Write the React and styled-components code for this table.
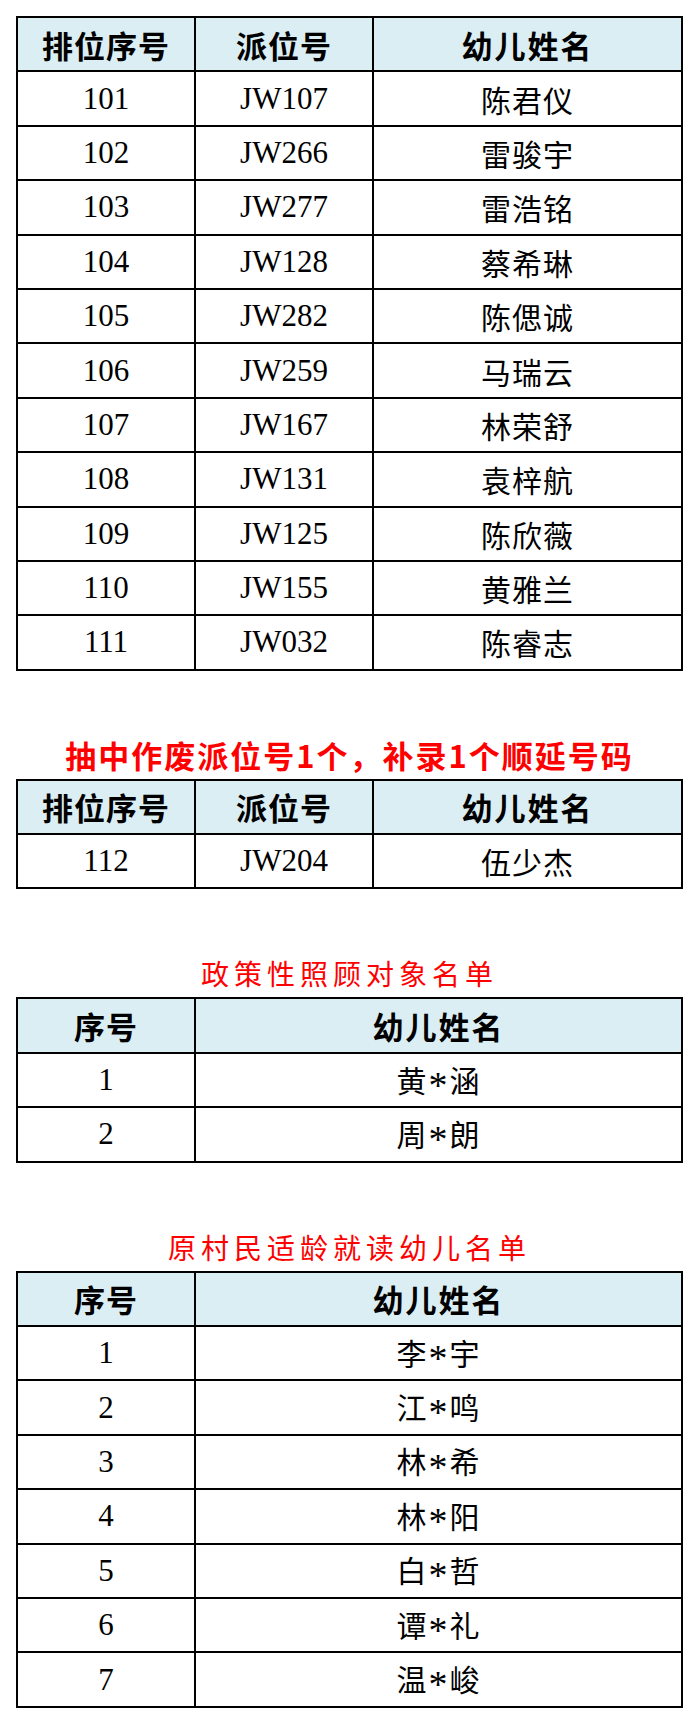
import styled, { createGlobalStyle } from 'styled-components';

const GlobalStyle = createGlobalStyle`
  html, body {
    margin: 0;
    padding: 0;
    background: #ffffff;
  }
`;

const lottery = [
  ['101', 'JW107', '陈君仪'],
  ['102', 'JW266', '雷骏宇'],
  ['103', 'JW277', '雷浩铭'],
  ['104', 'JW128', '蔡希琳'],
  ['105', 'JW282', '陈偲诚'],
  ['106', 'JW259', '马瑞云'],
  ['107', 'JW167', '林荣舒'],
  ['108', 'JW131', '袁梓航'],
  ['109', 'JW125', '陈欣薇'],
  ['110', 'JW155', '黄雅兰'],
  ['111', 'JW032', '陈睿志'],
];

const extra = [['112', 'JW204', '伍少杰']];

const policy = ['黄*涵', '周*朗'];

const villagers = ['李*宇', '江*鸣', '林*希', '林*阳', '白*哲', '谭*礼', '温*峻'];

// 把姓名中间的 * 单独放进 span，让它居中
const maskName = (name) => {
  const parts = name.split('*');
  if (parts.length < 2) return name;
  return (
    <>
      {parts[0]}
      <Star>*</Star>
      {parts[1]}
    </>
  );
};

// 三列表格（排位序号 / 派位号 / 幼儿姓名）
const DrawTable = ({ rows }) => (
  <Table>
    <colgroup>
      <col style={{ width: 178 }} />
      <col style={{ width: 178 }} />
      <col />
    </colgroup>
    <thead>
      <Row>
        <HeadCell>排位序号</HeadCell>
        <HeadCell>派位号</HeadCell>
        <HeadCell $wide>幼儿姓名</HeadCell>
      </Row>
    </thead>
    <tbody>
      {rows.map((r) => (
        <Row key={r[0]}>
          <Cell>{r[0]}</Cell>
          <Cell>{r[1]}</Cell>
          <NameCell>{r[2]}</NameCell>
        </Row>
      ))}
    </tbody>
  </Table>
);

// 两列表格（序号 / 幼儿姓名）
const NameTable = ({ names }) => (
  <Table>
    <colgroup>
      <col style={{ width: 178 }} />
      <col />
    </colgroup>
    <thead>
      <Row>
        <HeadCell>序号</HeadCell>
        <HeadCell $wide>幼儿姓名</HeadCell>
      </Row>
    </thead>
    <tbody>
      {names.map((n, idx) => (
        <Row key={n}>
          <Cell>{idx + 1}</Cell>
          <NameCell>{maskName(n)}</NameCell>
        </Row>
      ))}
    </tbody>
  </Table>
);

const App = () => {
  return (
    <>
      <GlobalStyle />
      <Page>
        <DrawTable rows={lottery} />

        <Title $bold>抽中作废派位号1个，补录1个顺延号码</Title>
        <DrawTable rows={extra} />

        <Title>政策性照顾对象名单</Title>
        <NameTable names={policy} />

        <Title>原村民适龄就读幼儿名单</Title>
        <NameTable names={villagers} />
      </Page>
    </>
  );
};

const Page = styled.div`
  width: 700px;
  min-height: 1717px;
  box-sizing: border-box;
  padding: 16px 0 0 16px;
  background: #ffffff;
`;

const Title = styled.div`
  width: 667px;
  margin: 64px 0 4px;
  height: 40px;
  line-height: 40px;
  text-align: center;
  color: #ff0000;
  font-family: 'Noto Sans CJK SC', sans-serif;
  font-size: ${(props) => (props.$bold ? '31px' : '28px')};
  font-weight: ${(props) => (props.$bold ? 700 : 400)};
  letter-spacing: ${(props) => (props.$bold ? '2px' : '5px')};
  white-space: nowrap;
`;

const Table = styled.table`
  width: 667px;
  table-layout: fixed;
  border-collapse: collapse;
  border: 2px solid #000000;
  color: #000000;
  font-family: 'Liberation Serif', 'Noto Sans CJK SC', serif;
`;

const Row = styled.tr`
  height: 54.4px;
`;

const HeadCell = styled.th`
  border: 2px solid #000000;
  background-color: #daeef3;
  font-size: 31px;
  font-weight: 700;
  letter-spacing: ${(props) => (props.$wide ? '2px' : '1px')};
  text-align: center;
  vertical-align: middle;
  padding: 0;
`;

const Cell = styled.td`
  border: 2px solid #000000;
  font-size: 31px;
  text-align: center;
  vertical-align: middle;
  padding: 0;
`;

const NameCell = styled(Cell)`
  font-family: 'Noto Sans CJK SC', sans-serif;
  font-size: 30px;
  letter-spacing: 1px;
`;

const Star = styled.span`
  font-family: 'Liberation Serif', serif;
  font-size: 38px;
  line-height: 1;
  vertical-align: -0.16em;
  margin: 0 1px;
`;

export default App;
